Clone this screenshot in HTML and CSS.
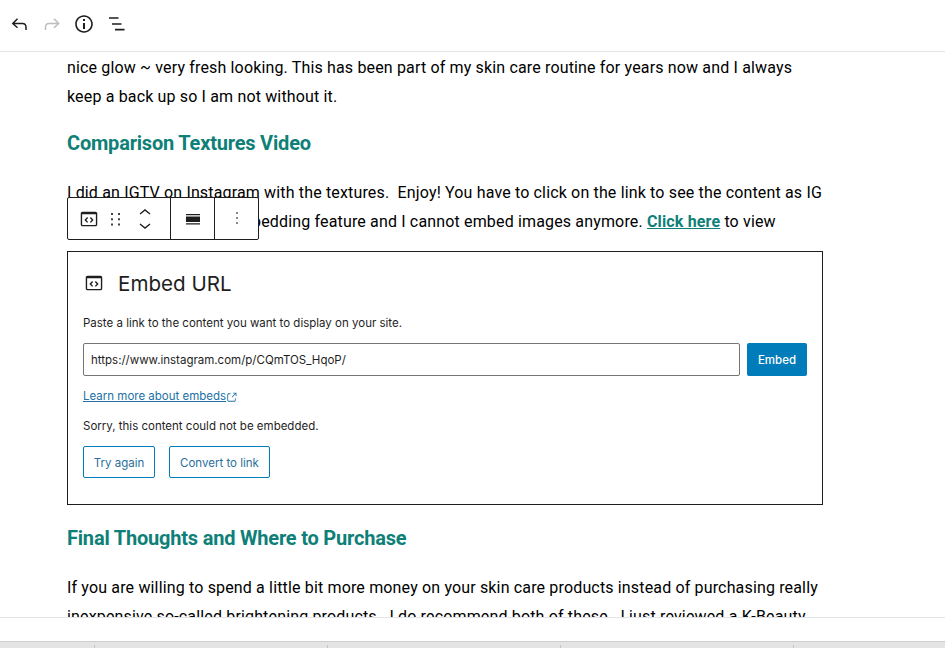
FILE: index.html
```html
<!DOCTYPE html>
<html lang="en">
<head>
<meta charset="utf-8">
<title>Editor</title>
<link rel="stylesheet" href="styles.css">
</head>
<body>
<div class="app">
  <header class="topbar">
    <svg class="tb-icon stroked" viewBox="0 0 24 24"><path d="M9.500 6.800L4.800 11.500l4.700 4.200M5 11.500h9.500c2.800 0 3.500 2 3.500 4v2.500"/></svg>
    <svg class="tb-icon stroked muted" viewBox="0 0 24 24"><path d="M14 6.800l4.700 4.700-4.700 4.200M18.500 11.500H9c-2.800 0-3.500 2-3.500 4v2.500"/></svg>
    <svg class="tb-icon" viewBox="0 0 24 24"><path d="M12 3.200c-4.800 0-8.800 3.900-8.800 8.800 0 4.800 3.900 8.800 8.800 8.800 4.800 0 8.800-3.900 8.800-8.800 0-4.800-4-8.800-8.800-8.800zm0 16c-4 0-7.200-3.300-7.200-7.200C4.800 8 8 4.800 12 4.800s7.200 3.300 7.200 7.200c0 4-3.200 7.200-7.200 7.200zM11 17h2v-6h-2v6zm0-8h2V7h-2v2z"/></svg>
    <svg class="tb-icon" viewBox="0 0 24 24"><path d="M5 5.200h9.500v1.600H5zM8 11.200h9.500v1.600H8zM11 16.800h9.500v1.600H11z"/></svg>
  </header>
  <main class="canvas">
    <article class="doc">
      <p class="para">nice glow ~ very fresh looking. This has been part of my skin care routine for years now and I always keep a back up so I am not without it.</p>
      <h2 class="head">Comparison Textures Video</h2>
      <p class="para">I did an IGTV on Instagram with the textures.&nbsp; Enjoy! You have to click on the link to see the content as IG has since removed its embedding feature and I cannot embed images anymore. <a class="link" href="#">Click here</a> to view</p>
      <section class="embed">
        <div class="embed-title">
          <svg class="embed-icon" viewBox="0 0 24 24"><path d="M19 4H5c-1.100 0-2 .9-2 2v12c0 1.100.9 2 2 2h14c1.100 0 2-.9 2-2V6c0-1.100-.9-2-2-2zm.5 14c0 .3-.2.500-.5.500H5c-.3 0-.5-.2-.5-.5V6.800h15V18z"/><path class="chev" d="M10.500 10.300L8 13l2.500 2.700M13.500 10.300L16 13l-2.500 2.700"/></svg>
          <span>Embed URL</span>
        </div>
        <p class="embed-help">Paste a link to the content you want to display on your site.</p>
        <div class="embed-form">
          <div class="url-input">https://www.instagram.com/p/CQmTOS_HqoP/</div>
          <button class="btn-primary">Embed</button>
        </div>
        <p class="learn"><a href="#">Learn more about embeds</a><svg class="ext" viewBox="0 0 24 24"><path d="M18.200 17c0 .7-.6 1.200-1.200 1.200H7c-.7 0-1.200-.6-1.200-1.200V7c0-.7.600-1.200 1.200-1.200h3.200V4.200H7C5.500 4.200 4.200 5.500 4.200 7v10c0 1.500 1.200 2.800 2.800 2.800h10c1.500 0 2.800-1.200 2.800-2.800v-3.600h-1.500V17zM14.900 3v1.500h3.700l-6.400 6.400 1.100 1.100 6.400-6.400v3.700h1.500V3h-6.300z"/></svg></p>
        <p class="sorry">Sorry, this content could not be embedded.</p>
        <div class="embed-actions">
          <button class="btn-outline try">Try again</button>
          <button class="btn-outline convert">Convert to link</button>
        </div>
      </section>
      <h2 class="head second">Final Thoughts and Where to Purchase</h2>
      <p class="para">If you are willing to spend a little bit more money on your skin care products instead of purchasing really inexpensive so-called brightening products.&nbsp; I do recommend both of these.&nbsp; I just reviewed a K-Beauty</p>
    </article>
    <div class="block-toolbar">
      <div class="tool-group first">
        <svg class="t-embed" viewBox="0 0 24 24"><path d="M19 4H5c-1.100 0-2 .9-2 2v12c0 1.100.9 2 2 2h14c1.100 0 2-.9 2-2V6c0-1.100-.9-2-2-2zm.5 14c0 .3-.2.500-.5.500H5c-.3 0-.5-.2-.5-.5V6.800h15V18z"/><path class="chev" d="M10.500 10.300L8 13l2.500 2.700M13.500 10.300L16 13l-2.500 2.700"/></svg>
        <svg class="t-drag" viewBox="0 0 12 16"><path d="M2 2h2v2H2zM9 2h2v2H9zM2 7.300h2v2H2zM9 7.300h2v2H9zM2 12.500h2v2H2zM9 12.500h2v2H9z"/></svg>
        <div class="movers">
          <svg viewBox="0 0 12 6"><path d="M1 5l5-4 5 4"/></svg>
          <svg viewBox="0 0 12 6"><path d="M1 1l5 4 5-4"/></svg>
        </div>
      </div>
      <div class="tool-group align">
        <svg viewBox="0 0 24 24"><path d="M5 7h14v1.200H5zM5 9.500h14V15H5zM5 16.300h14v1.200H5z"/></svg>
      </div>
      <div class="tool-group more">
        <svg viewBox="0 0 24 24"><path d="M11 5h2v2h-2zM11 11h2v2h-2zM11 17h2v2h-2z"/></svg>
      </div>
    </div>
  </main>
  <div class="footer-strip"></div>
  <div class="tray"><i></i><i></i><i></i><i></i></div>
</div>
</body>
</html>
```

FILE: styles.css
```css
* { box-sizing: border-box; }
html, body { margin: 0; height: 100%; overflow: hidden; background: #fff; }
.app { display: flex; flex-direction: column; height: 648px; width: 945px; font-family: Inter, "Liberation Sans", sans-serif; color: #1e1e1e; }

.topbar { flex: none; height: 52px; border-bottom: 1px solid #e2e4e7; display: flex; align-items: center; gap: 8px; padding: 0 8px 3px; }
.tb-icon { width: 24px; height: 24px; fill: #1e1e1e; }
.tb-icon.stroked { fill: none; stroke: #1e1e1e; stroke-width: 1.500; }
.tb-icon.stroked.muted { fill: none; stroke: #bdbdbd; }

.canvas { flex: 1; position: relative; overflow: hidden; min-height: 0; }
.doc { width: 756px; margin-left: 67px; padding-top: 1px; font-family: Roboto, "Liberation Sans", sans-serif; }
.para { margin: 0; font-size: 16px; line-height: 29px; color: #000; letter-spacing: 0.155px; }
.head { margin: 18px 0 21px; font-size: 20px; font-weight: 700; line-height: 28px; color: #0e8077; letter-spacing: -0.2px; }
.head.second { margin-top: 19px; }
.link { color: #0e8077; font-weight: 700; }

.embed { margin-top: 15px; height: 254px; border: 1px solid #1e1e1e; padding: 15px; font-family: Inter, "Liberation Sans", sans-serif; font-size: 11.500px; }
.embed-title { display: flex; align-items: center; gap: 13px; height: 32px; font-size: 20.600px; }
.embed-icon { width: 22px; height: 22px; fill: #1e1e1e; }
.chev { fill: none; stroke: #1e1e1e; stroke-width: 1.500; }
.embed-help { margin: 16px 0 0; line-height: 16px; color: #1e1e1e; }
.embed-form { display: flex; gap: 7px; margin-top: 12px; height: 33px; }
.url-input { flex: 1; border: 1px solid #757575; border-radius: 2px; padding: 0 7px; display: flex; align-items: center; font-size: 11.500px; color: #1e1e1e; }
.btn-primary { width: 60px; border: 0; border-radius: 2px; background: #007cba; color: #fff; font: 500 11.500px Inter, "Liberation Sans", sans-serif; }
.learn { display: flex; align-items: center; margin: 12px 0 0; line-height: 16px; }
.learn a { color: #2271a6; }
.ext { width: 13px; height: 13px; fill: #2271a6; margin-left: -1px; margin-top: 2px; }
.sorry { margin: 14px 0 0; line-height: 16px; }
.embed-actions { display: flex; gap: 14px; margin-top: 12px; }
.btn-outline { height: 32px; padding: 1px 0 0; background: #fff; border: 1px solid #007cba; border-radius: 2px; color: #2a6f9c; font: 11.500px Inter, "Liberation Sans", sans-serif; }
.btn-outline.try { width: 72px; }
.btn-outline.convert { width: 101px; }

.block-toolbar { position: absolute; left: 67px; top: 145px; height: 43px; width: 192px; display: flex; background: #fff; border: 1px solid #1e1e1e; border-radius: 2px; }
.tool-group { display: flex; align-items: center; justify-content: center; border-right: 1px solid #1e1e1e; }
.tool-group svg { fill: #1e1e1e; }
.tool-group.first { width: 103px; padding-left: 10px; justify-content: flex-start; }
.t-embed { width: 22px; height: 22px; flex: none; }
.t-drag { width: 12px; height: 16px; margin-left: 9px; flex: none; }
.tool-group .t-drag { fill: #444; }
.movers { display: flex; flex-direction: column; gap: 8px; margin-left: 18px; margin-top: 1px; flex: none; }
.movers svg { display: block; width: 12px; height: 6px; fill: none; stroke: #1e1e1e; stroke-width: 1.400; }
.tool-group.align { width: 44px; }
.tool-group.align svg { width: 24px; height: 24px; }
.tool-group.more { flex: 1; border-right: 0; }
.tool-group.more svg { width: 20px; height: 20px; margin-top: -1px; }
.tool-group.more svg { fill: #444; }

.footer-strip { flex: none; height: 24px; background: #fff; border-top: 1px solid #e2e4e7; }
.tray { flex: none; height: 7px; background: #e4e4e4; border-top: 1px solid #cfcfcf; display: grid; grid-template-columns: 95px repeat(3, 233px) 1fr; }
.tray i { display: block; height: 3px; margin-top: 3px; border-right: 1px solid #c4c4c4; }
```
